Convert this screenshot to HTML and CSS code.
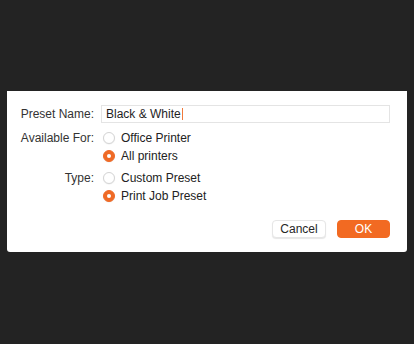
FILE: index.html
```html
<!DOCTYPE html>
<html lang="en">
<head>
    <meta charset="UTF-8">
    <meta name="viewport" content="width=device-width, initial-scale=1.0">
    <title>Preset</title>
    <link rel="stylesheet" href="styles.css">
</head>
<body>
    <div class="dialog">
        <form class="preset-form">
            <label class="field-label" for="presetName"><span>Preset Name:</span></label>
            <div class="name-box" id="presetName">Black &amp; White<span class="caret"></span></div>

            <div class="field-label"><span>Available For:</span></div>
            <div class="options">
                <div class="option"><span class="radio"></span>Office Printer</div>
                <div class="option"><span class="radio checked"></span>All printers</div>
            </div>

            <div class="field-label"><span>Type:</span></div>
            <div class="options">
                <div class="option"><span class="radio"></span>Custom Preset</div>
                <div class="option"><span class="radio checked"></span>Print Job Preset</div>
            </div>
        </form>
        <div class="buttons">
            <button type="button" class="btn btn-cancel">Cancel</button>
            <button type="button" class="btn btn-ok">OK</button>
        </div>
    </div>
</body>
</html>
```

FILE: styles.css
```css
body {
    margin: 0;
    padding: 91px 0 0 7px;
    height: 344px;
    box-sizing: border-box;
    background-color: #232323;
    font-family: "Liberation Sans", Arial, sans-serif;
    font-size: 12px;
    color: #262626;
    overflow: hidden;
}
.dialog {
    width: 400px;
    height: 161px;
    box-sizing: border-box;
    padding: 14px 17px 14px 16px;
    background-color: #fff;
    border-radius: 0 0 3px 3px;
    display: flex;
    flex-direction: column;
}
.preset-form {
    display: grid;
    grid-template-columns: 71px 1fr;
    column-gap: 7px;
    row-gap: 6px;
}
.field-label {
    display: flex;
    justify-content: flex-end;
    white-space: nowrap;
    line-height: 18px;
    height: 18px;
    color: #333;
}
.options + .field-label {
    margin-top: -2px;
}
.name-box {
    height: 18px;
    box-sizing: border-box;
    border: 1px solid #e4e4e4;
    padding: 0 4px;
    line-height: 16px;
    color: #1e1e1e;
    display: flex;
    align-items: center;
}
.caret {
    display: inline-block;
    width: 1px;
    height: 12px;
    margin-left: 1px;
    background-color: #f07a3c;
}
.options {
    display: flex;
    flex-direction: column;
}
.options + .field-label + .options {
    margin-top: -2px;
}
.option {
    height: 18px;
    display: flex;
    align-items: center;
    padding-left: 2px;
    color: #222;
}
.radio {
    width: 12px;
    height: 12px;
    box-sizing: border-box;
    border: 1px solid #d4d4d4;
    border-radius: 50%;
    background-color: #fff;
    box-shadow: 0 0.5px 1px rgba(0, 0, 0, 0.08);
    margin-right: 6px;
    position: relative;
}
.radio.checked {
    border-color: #ef6a26;
    background-color: #ef6a26;
}
.radio.checked::after {
    content: "";
    position: absolute;
    left: 3px;
    top: 3px;
    width: 4px;
    height: 4px;
    border-radius: 50%;
    background-color: #fff;
}
.buttons {
    margin-top: auto;
    display: flex;
    justify-content: flex-end;
    gap: 11px;
}
.btn {
    height: 18px;
    padding: 0;
    border-radius: 4px;
    font-family: inherit;
    font-size: 12px;
    line-height: 16px;
    cursor: pointer;
}
.btn-cancel {
    width: 54px;
    background-color: #fff;
    color: #262626;
    border: 1px solid #e6e6e6;
    box-shadow: 0 1px 1px rgba(0, 0, 0, 0.1);
}
.btn-ok {
    width: 53px;
    background-color: #f26a22;
    color: #fff;
    border: 1px solid #f26a22;
}
```
